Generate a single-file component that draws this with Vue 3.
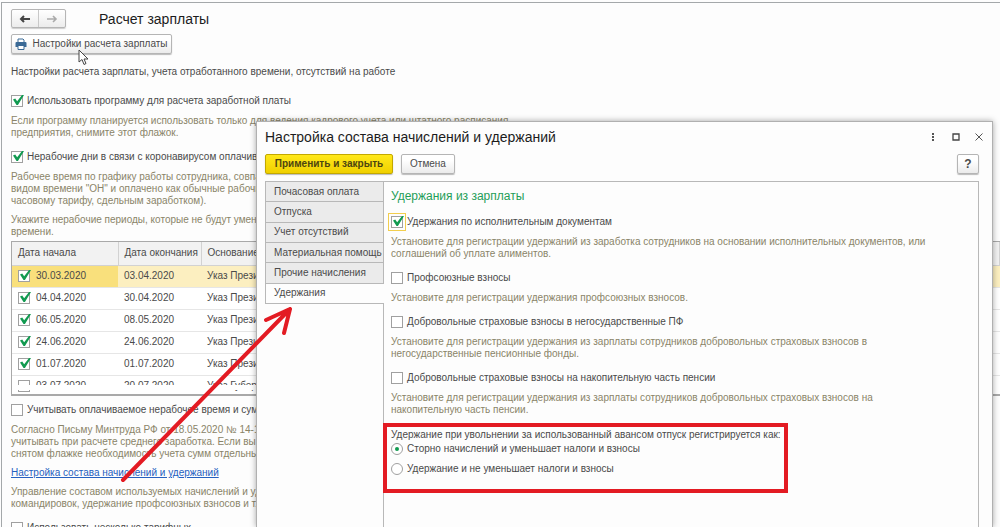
<script setup>
import { ref } from 'vue'

const useProgram = ref(true)
const paidDays = ref(true)
const countPaid = ref(false)
const extra = ref(false)

const periods = ref([
  { on: true, start: '30.03.2020', end: '03.04.2020', reason: 'Указ Презид' },
  { on: true, start: '04.04.2020', end: '30.04.2020', reason: 'Указ Презид' },
  { on: true, start: '06.05.2020', end: '08.05.2020', reason: 'Указ Презид' },
  { on: true, start: '24.06.2020', end: '24.06.2020', reason: 'Указ Презид' },
  { on: true, start: '01.07.2020', end: '01.07.2020', reason: 'Указ Презид' },
  { on: false, start: '03.07.2020', end: '20.07.2020', reason: 'Указ Губер' }
])

const tabs = ['Почасовая оплата', 'Отпуска', 'Учет отсутствий', 'Материальная помощь', 'Прочие начисления', 'Удержания']
const activeTab = ref('Удержания')

const options = ref([
  {
    on: true,
    focus: true,
    label: 'Удержания по исполнительным документам',
    hint: ['Установите для регистрации удержаний из заработка сотрудников на основании исполнительных документов, или', 'соглашений об уплате алиментов.']
  },
  {
    on: false,
    label: 'Профсоюзные взносы',
    hint: ['Установите для регистрации удержания профсоюзных взносов.']
  },
  {
    on: false,
    label: 'Добровольные страховые взносы в негосударственные ПФ',
    hint: ['Установите для регистрации удержания из зарплаты сотрудников добровольных страховых взносов в', 'негосударственные пенсионные фонды.']
  },
  {
    on: false,
    label: 'Добровольные страховые взносы на накопительную часть пенсии',
    hint: ['Установите для регистрации удержания из зарплаты сотрудников добровольных страховых взносов на', 'накопительную часть пенсии.']
  }
])

const mode = ref('storno')
</script>

<template>
  <div class="window">
    <main class="page">
      <header class="head">
        <div class="nav">
          <button type="button" aria-label="Назад">
            <svg width="12" height="10" viewBox="0 0 12 10"><path d="M11 5H2M5 2L2 5l3 3" fill="none" stroke="#444" stroke-width="2" /></svg>
          </button>
          <button type="button" aria-label="Вперед">
            <svg width="12" height="10" viewBox="0 0 12 10"><path d="M1 5h9M7 2l3 3-3 3" fill="none" stroke="#aaa" stroke-width="1.6" /></svg>
          </button>
        </div>
        <h1>Расчет зарплаты</h1>
      </header>

      <button type="button" class="btn settings">
        <svg width="12" height="12" viewBox="0 0 12 12">
          <path d="M3 4V1h5l1 1v2" fill="#fff" stroke="#3b6a96" />
          <path d="M1.5 4h9q1 0 1 1v4h-11V5q0-1 1-1z" fill="#3b6a96" />
          <path d="M3 7.500h6v4H3z" fill="#fff" stroke="#3b6a96" />
        </svg>
        <span>Настройки расчета зарплаты</span>
      </button>

      <p class="intro">Настройки расчета зарплаты, учета отработанного времени, отсутствий на работе</p>

      <label class="row"><input v-model="useProgram" type="checkbox" class="cb" /><span>Использовать программу для расчета заработной платы</span></label>
      <p class="hint">Если программу планируется использовать только для ведения кадрового учета или штатного расписания<br />предприятия, снимите этот флажок.</p>

      <label class="row"><input v-model="paidDays" type="checkbox" class="cb" /><span>Нерабочие дни в связи с коронавирусом оплачива</span></label>
      <p class="hint">Рабочее время по графику работы сотрудника, совпад<br />видом времени "ОН" и оплачено как обычные рабочие<br />часовому тарифу, сдельным заработком).</p>
      <p class="hint">Укажите нерабочие периоды, которые не будут уменьш<br />времени.</p>

      <div class="grid">
        <table>
          <thead>
            <tr><th class="c1">Дата начала</th><th class="c2">Дата окончания</th><th>Основание</th></tr>
          </thead>
          <tbody>
            <tr v-for="(p, i) in periods" :key="i" :class="{ current: i === 0, cut: i === periods.length - 1 }">
              <td><label class="cell"><input v-model="p.on" type="checkbox" class="cb" /><span>{{ p.start }}</span></label></td>
              <td>{{ p.end }}</td>
              <td>{{ p.reason }}</td>
            </tr>
          </tbody>
        </table>
      </div>

      <label class="row"><input v-model="countPaid" type="checkbox" class="cb" /><span>Учитывать оплачиваемое нерабочее время и сумм</span></label>
      <p class="hint">Согласно Письму Минтруда РФ от 18.05.2020 № 14-1/<br />учитывать при расчете среднего заработка. Если вы н<br />снятом флажке необходимость учета сумм отдельных</p>
      <a href="#" class="link">Настройка состава начислений и удержаний</a>
      <p class="hint">Управление составом используемых начислений и уде<br />командировок, удержание профсоюзных взносов и т.д</p>
      <label class="row"><input v-model="extra" type="checkbox" class="cb" /><span>Использовать несколько тарифных</span></label>
    </main>

    <section class="dialog" role="dialog" aria-labelledby="dlg-title">
      <header class="dlg-head">
        <h2 id="dlg-title">Настройка состава начислений и удержаний</h2>
        <div class="winctl">
          <button type="button" aria-label="Меню"><svg width="10" height="10" viewBox="0 0 10 10"><path d="M4 1h2v2H4zM4 4h2v2H4zM4 7h2v2H4z" fill="#555" /></svg></button>
          <button type="button" aria-label="Развернуть"><svg width="10" height="10" viewBox="0 0 10 10"><path d="M2 2h6v6H2z" fill="none" stroke="#444" stroke-width="1.300" /></svg></button>
          <button type="button" aria-label="Закрыть"><svg width="10" height="10" viewBox="0 0 10 10"><path d="M1.500 1.500l7 7M8.500 1.500l-7 7" fill="none" stroke="#555" /></svg></button>
        </div>
      </header>
      <div class="bar">
        <button type="button" class="btn primary">Применить и закрыть</button>
        <button type="button" class="btn cancel">Отмена</button>
        <button type="button" class="btn help">?</button>
      </div>
      <div class="body">
        <div class="tabs" role="tablist">
          <button v-for="t in tabs" :key="t" type="button" role="tab" :class="{ active: t === activeTab }" @click="activeTab = t">{{ t }}</button>
        </div>
        <div class="panel">
          <h3>Удержания из зарплаты</h3>
          <template v-for="o in options" :key="o.label">
            <label class="row"><input v-model="o.on" type="checkbox" class="cb" :class="{ focus: o.focus }" /><span>{{ o.label }}</span></label>
            <p class="hint"><template v-for="(l, i) in o.hint" :key="i"><br v-if="i" />{{ l }}</template></p>
          </template>
          <fieldset class="marked">
            <legend>Удержание при увольнении за использованный авансом отпуск регистрируется как:</legend>
            <label class="row"><input v-model="mode" type="radio" value="storno" name="mode" class="rb" /><span>Сторно начислений и уменьшает налоги и взносы</span></label>
            <label class="row"><input v-model="mode" type="radio" value="hold" name="mode" class="rb" /><span>Удержание и не уменьшает налоги и взносы</span></label>
          </fieldset>
        </div>
      </div>
    </section>

    <svg class="arrow" width="180" height="180" viewBox="0 0 180 180" aria-hidden="true">
      <path d="M5 177L172 6M148 17L172 6L166 30" fill="none" stroke="#e31b23" stroke-width="4" stroke-linecap="round" stroke-linejoin="round" />
    </svg>
    <svg class="cursor" width="11" height="17" viewBox="0 0 11 17" aria-hidden="true">
      <path d="M1 1v12l3-2.500 2 5 2-1-2-4.500h4z" fill="#fff" stroke="#444" />
    </svg>
  </div>
</template>

<style>
html,
body {
  background: #fdfdfd;
  overflow: hidden;
}
</style>

<style scoped>
.window {
  position: relative;
  height: 100vh;
  overflow: hidden;
  box-sizing: border-box;
  padding: 2px 0 0 1px;
  font-family: "Liberation Sans", Arial, sans-serif;
  font-size: 10px;
  line-height: 12px;
  color: #4a4a4a;
  white-space: nowrap;
}
h1, h2, h3, p, fieldset {
  margin: 0;
  padding: 0;
  font-weight: normal;
}
button {
  font: inherit;
  color: inherit;
  padding: 0;
}
.page {
  border-top: 1px solid #a4a8aa;
  border-left: 1px solid #a4a8aa;
  padding: 6px 0 0 9px;
}
.head {
  display: flex;
  align-items: center;
  gap: 33px;
  height: 19px;
}
.nav {
  display: flex;
  box-sizing: border-box;
  width: 55px;
  height: 19px;
  border: 1px solid #b5b5b5;
  border-radius: 2px;
  background: linear-gradient(#fff, #ececec);
  box-shadow: 0 1px 1px #ccc;
}
.nav button {
  flex: 1;
  display: flex;
  align-items: center;
  justify-content: center;
  border: 0;
  background: none;
}
.nav button + button {
  border-left: 1px solid #c8c8c8;
}
h1, h2 {
  font-size: 14px;
  line-height: 18px;
  color: #1c1c1c;
}
.btn {
  display: flex;
  align-items: center;
  justify-content: center;
  box-sizing: border-box;
  height: 20px;
  border: 1px solid #b5b5b5;
  border-radius: 2px;
  background: linear-gradient(#fff 30%, #ebebeb);
  box-shadow: 0 1px 1px #bbb;
}
.settings {
  width: 161px;
  gap: 5px;
  margin-top: 6px;
}
.intro {
  margin: 12px 0 16px;
}
.row {
  display: flex;
  align-items: center;
  gap: 4px;
  height: 14px;
  margin-top: 11px;
}
.cb, .rb {
  appearance: none;
  position: relative;
  flex: none;
  box-sizing: border-box;
  width: 12px;
  height: 12px;
  margin: 0;
  border: 1px solid #a0a0a0;
  background: #fff;
}
.cb:checked::after {
  content: "";
  position: absolute;
  left: 1px;
  top: -1px;
  width: 11px;
  height: 10px;
  background: #119a50;
  clip-path: polygon(0 45%, 20% 36%, 38% 62%, 82% 0, 100% 0, 45% 100%, 32% 100%);
}
.cb.focus {
  outline: 1px solid #f2ce4e;
  outline-offset: 2px;
}
.rb {
  border-radius: 50%;
}
.rb:checked::after {
  content: "";
  position: absolute;
  inset: 3px;
  border-radius: 50%;
  background: #119a50;
}
.hint {
  margin-top: 7px;
  color: #8a8468;
}
.grid {
  height: 155px;
  box-sizing: border-box;
  margin: 3px 0 7px;
  overflow: hidden;
  border: 1px solid #a9a9a9;
  border-bottom-width: 2px;
  border-right: 0;
  background: #fff;
}
.grid + .row {
  margin-top: 0;
}
table {
  width: 100%;
  table-layout: fixed;
  border-collapse: collapse;
}
th, td {
  box-sizing: border-box;
  padding: 0 6px;
  text-align: left;
  font-weight: normal;
}
th {
  height: 23px;
  background: #f2f2f2;
  border-right: 1px solid #d2d2d2;
  border-bottom: 1px solid #d2d2d2;
}
.c1 {
  width: 106px;
}
.c2 {
  width: 83px;
}
td {
  height: 22px;
  border-bottom: 1px solid #e6e6e6;
}
.current td {
  background: #fcefc0;
}
.current td:first-child {
  background: #f9e07c;
}
.cell {
  display: flex;
  align-items: center;
  gap: 6px;
}
.cut td {
  position: relative;
  border-bottom: 0;
}
.cut td::after {
  content: "";
  position: absolute;
  left: 0;
  right: 0;
  top: 9px;
  height: 5px;
  background: #fff;
}
.link {
  display: block;
  width: max-content;
  margin-top: 7px;
  color: #2560c0;
}
.dialog {
  position: absolute;
  left: 256px;
  right: 7px;
  top: 121px;
  bottom: 0;
  display: flex;
  flex-direction: column;
  box-sizing: border-box;
  border: 1px solid #b0b0b0;
  border-bottom: 0;
  background: #fdfdfd;
  padding: 6px 13px 0 8px;
  box-shadow: 0 0 6px rgba(0, 0, 0, 0.35);
}
.dlg-head {
  display: flex;
  align-items: center;
  justify-content: space-between;
  height: 18px;
}
.winctl {
  display: flex;
  gap: 13px;
  margin-right: -5px;
}
.winctl button {
  display: flex;
  border: 0;
  background: none;
}
.bar {
  display: flex;
  gap: 8px;
  margin-top: 8px;
}
.primary {
  width: 128px;
  font-weight: bold;
  color: #4d4510;
  border-color: #c3a800;
  background: linear-gradient(#ffe81a, #f0d000);
}
.cancel {
  width: 54px;
}
.help {
  width: 22px;
  margin-left: auto;
  font-size: 12px;
  font-weight: bold;
}
.body {
  flex: 1;
  display: flex;
  margin-top: 7px;
}
.tabs {
  display: flex;
  flex-direction: column;
  width: 119px;
  height: 123px;
  margin-right: -1px;
  z-index: 1;
}
.tabs button {
  flex: 1;
  box-sizing: border-box;
  padding-left: 8px;
  text-align: left;
  border: 1px solid #b8b8b8;
  border-bottom: 0;
  background: #ebebeb;
}
.tabs button.active {
  border-right: 0;
  border-bottom: 1px solid #b8b8b8;
  background: #fdfdfd;
}
.panel {
  flex: 1;
  border: 1px solid #b8b8b8;
  border-bottom: 0;
  padding: 6px 0 0 7px;
}
h3 {
  font-size: 12px;
  line-height: 16px;
  color: #1f9e58;
}
.panel .row {
  margin-top: 11px;
}
.marked {
  width: 405px;
  min-width: 0;
  height: 70px;
  box-sizing: border-box;
  margin: 7px 0 0 -8px;
  border: 4px solid #e31b23;
  padding: 2px 0 0 4px;
}
.marked legend {
  float: left;
  width: 100%;
  margin-bottom: 1px;
  padding: 0;
}
.panel .marked .row {
  clear: both;
  margin: 0 0 6px;
}
.arrow {
  position: absolute;
  left: 118px;
  top: 303px;
}
.cursor {
  position: absolute;
  left: 78px;
  top: 49px;
}
</style>
